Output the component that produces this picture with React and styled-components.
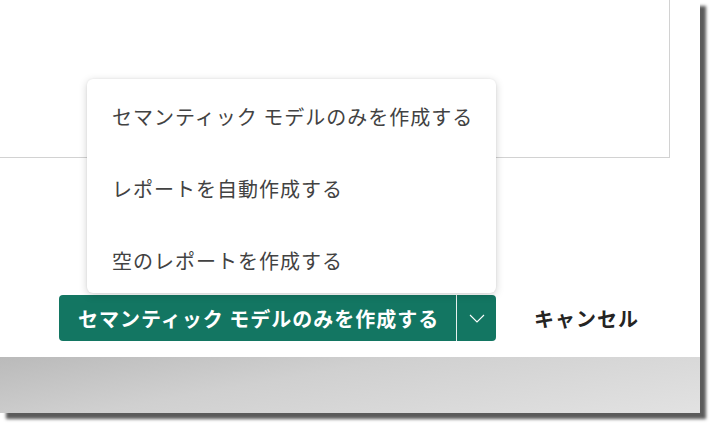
import React from "react";
import styled, { createGlobalStyle } from "styled-components";

const GlobalStyle = createGlobalStyle`
  html, body { margin: 0; padding: 0; background: #ffffff; }
  body { font-family: "Noto Sans CJK JP", "Noto Sans", sans-serif; }
`;

const Page = styled.div`
  width: 715px;
  height: 430px;
  padding: 0;
  box-sizing: border-box;
  background: #ffffff;
`;

const Frame = styled.div`
  width: 700px;
  height: 413px;
  display: flex;
  flex-direction: column;
  box-shadow: 6px 6px 3px rgba(50, 50, 50, 0.8);
`;

const Dialog = styled.div`
  height: 357px;
  background: #ffffff;
  display: flex;
  flex-direction: column;
  justify-content: space-between;
  padding-bottom: 16px;
  box-sizing: border-box;
`;

const Panel = styled.div`
  height: 158px;
  margin: 0 30px 0 -1px;
  border-right: 1px solid #d2d2d2;
  border-bottom: 1px solid #d2d2d2;
  box-sizing: border-box;
`;

const Overlay = styled.div`
  flex: 1;
  background: linear-gradient(170deg, #bababa 0%, #d0d0d0 40%, #e2e2e2 100%);
`;

const Footer = styled.div`
  display: flex;
  align-items: center;
  padding-left: 59px;
`;

const SplitButton = styled.div`
  position: relative;
  display: flex;
  height: 46px;
  border-radius: 4px;
  background: #137662;
`;

const MainAction = styled.div`
  display: flex;
  align-items: center;
  padding: 0 0 0 19px;
  width: 398px;
  box-sizing: border-box;
  color: #ffffff;
  font-size: 20px;
  font-weight: 700;
  letter-spacing: 1px;
  white-space: nowrap;
  border-right: 1px solid #e6f0ee;
`;

const Chevron = styled.div`
  width: 39px;
  display: flex;
  align-items: center;
  justify-content: center;
`;

const Cancel = styled.div`
  margin-left: 38px;
  font-size: 20px;
  font-weight: 700;
  letter-spacing: 1px;
  color: #252423;
  white-space: nowrap;
`;

const Menu = styled.div`
  position: absolute;
  right: 0;
  bottom: calc(100% + 2px);
  width: 409px;
  height: 214px;
  padding-top: 1px;
  box-sizing: border-box;
  background: #ffffff;
  border-radius: 6px;
  box-shadow: 0 2px 8px rgba(0, 0, 0, 0.18), 0 0 2px rgba(0, 0, 0, 0.08);
`;

const MenuItem = styled.div`
  height: 72px;
  display: flex;
  align-items: center;
  padding-left: 25px;
  font-size: 20px;
  font-weight: 400;
  letter-spacing: 1px;
  color: #424242;
  white-space: nowrap;
`;

export default function App() {
  const items = [
    "セマンティック モデルのみを作成する",
    "レポートを自動作成する",
    "空のレポートを作成する",
  ];
  return (
    <>
      <GlobalStyle />
      <Page>
        <Frame>
          <Dialog>
            <Panel />
            <Footer>
              <SplitButton>
                <MainAction>セマンティック モデルのみを作成する</MainAction>
                <Chevron>
                  <svg width="16" height="9" viewBox="0 0 16 9" fill="none">
                    <path d="M1 1l7 7 7-7" stroke="#ffffff" strokeWidth="1.1" />
                  </svg>
                </Chevron>
                <Menu>
                  {items.map((t) => (
                    <MenuItem key={t}>{t}</MenuItem>
                  ))}
                </Menu>
              </SplitButton>
              <Cancel>キャンセル</Cancel>
            </Footer>
          </Dialog>
          <Overlay />
        </Frame>
      </Page>
    </>
  );
}
